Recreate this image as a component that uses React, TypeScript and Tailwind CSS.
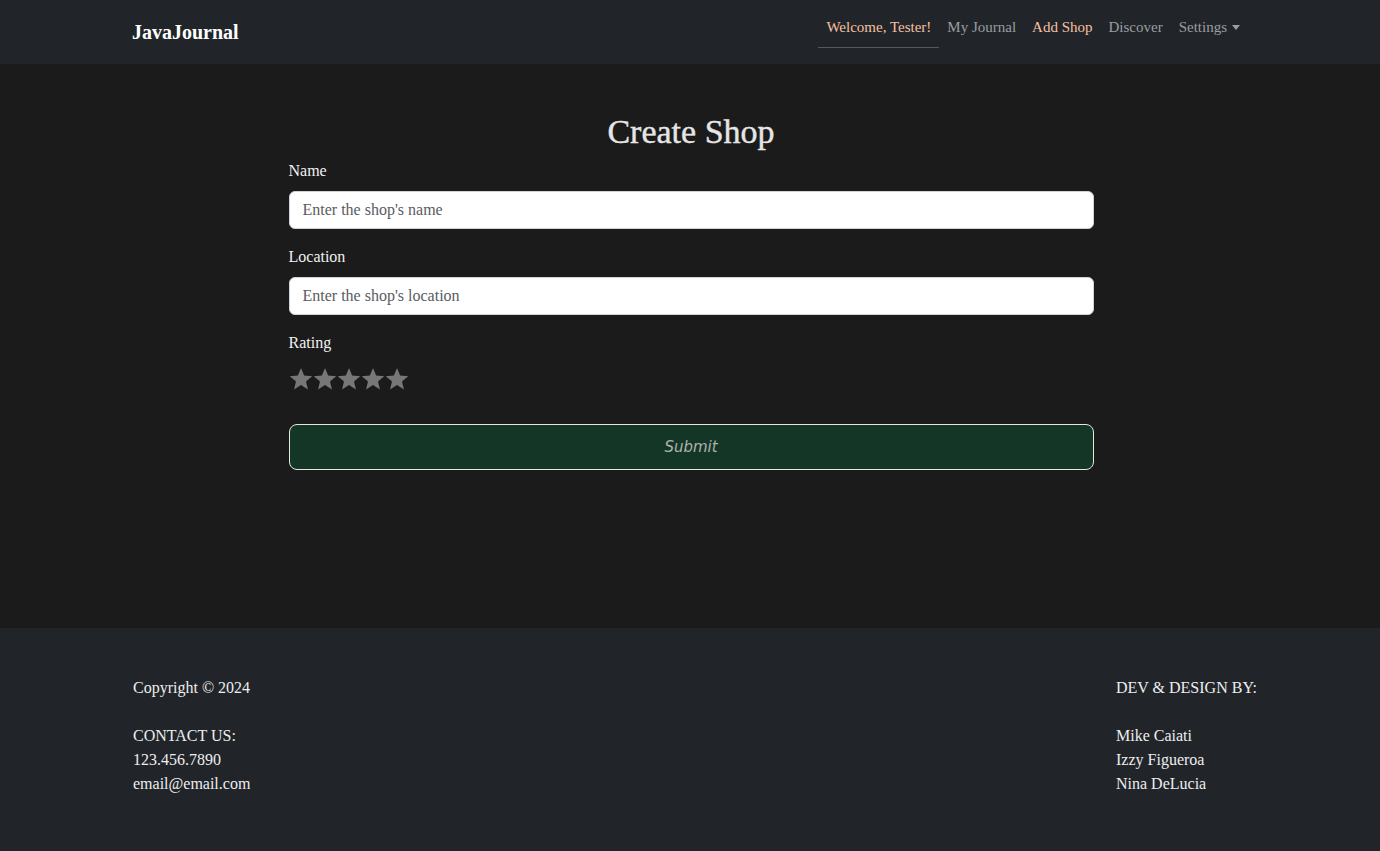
import React from 'react';

const serif = "font-['Liberation_Serif',serif]";

const Star = () => (
  <svg viewBox="0 0 24 24" className="h-[25px] w-[24px] fill-[#777777]">
    <path d="M12 1.5l3.09 7.6 8.16.6-6.25 5.28 1.95 7.97L12 18.6l-6.95 4.35 1.95-7.97L.75 9.7l8.16-.6z" />
  </svg>
);

const Navbar = () => (
  <nav className="h-16 bg-[#212529]">
    <div className="mx-auto flex h-full w-[1140px] items-center justify-between px-3">
      <a className={`${serif} text-[20px] font-bold text-white`}>JavaJournal</a>
      <ul className={`${serif} flex items-start self-start pt-[15px] text-[15px] leading-6`}>
        <li className="border-b border-[#55595e] px-2 pb-[8px] text-[#f7c0a1]">Welcome, Tester!</li>
        <li className="px-2 text-[#9a9da1]">My Journal</li>
        <li className="px-2 text-[#f7c0a1]">Add Shop</li>
        <li className="px-2 text-[#9a9da1]">Discover</li>
        <li className="flex items-center px-2 text-[#9a9da1]">
          Settings
          <span className="ml-[5px] mt-[1px] h-0 w-0 border-x-[4px] border-t-[5px] border-x-transparent border-t-[#9a9da1]" />
        </li>
      </ul>
    </div>
  </nav>
);

const Field = ({ label, placeholder }: { label: string; placeholder: string }) => (
  <div className="mb-[16px]">
    <label className="mb-[8px] block text-[16px] leading-6 text-[#f1f1f1]">{label}</label>
    <input
      placeholder={placeholder}
      className="h-[38px] w-full rounded-[6px] border border-[#ced4da] bg-white px-[13px] text-[16px] text-[#212529] placeholder:text-[#595c5f] outline-none"
    />
  </div>
);

export default function App() {
  return (
    <div className={`${serif} min-h-[851px] bg-[#1b1b1b]`}>
      <Navbar />
      <main className="h-[564px] pt-[48px]">
        <div className="mx-auto w-[805px] translate-x-[1px]">
          <h1 className="mb-[7px] text-center text-[34px] font-normal leading-10 text-[#e6e6e6] [-webkit-text-stroke:0.4px_#e6e6e6]">
            Create Shop
          </h1>
          <Field label="Name" placeholder="Enter the shop's name" />
          <Field label="Location" placeholder="Enter the shop's location" />
          <label className="mb-[11px] block text-[16px] leading-6 text-[#f1f1f1]">Rating</label>
          <div className="flex">
            {[0, 1, 2, 3, 4].map((i) => (
              <Star key={i} />
            ))}
          </div>
          <button className="mt-[33px] h-[46px] w-full rounded-[8px] border border-[#e6e6e6] bg-[#143626] font-['DejaVu_Sans',sans-serif] text-[15px] italic text-[#aab2ad]">
            Submit
          </button>
        </div>
      </main>
      <footer className="h-[223px] bg-[#212529] pt-[48px]">
        <div className="mx-auto flex w-[1140px] justify-between px-3 text-[16px] leading-6 text-[#eeeeee]">
          <div className="pl-[1px]">
            <p>Copyright © 2024</p>
            <p>&nbsp;</p>
            <p>CONTACT US:</p>
            <p>123.456.7890</p>
            <p>email@email.com</p>
          </div>
          <div className="w-[132px]">
            <p className="whitespace-nowrap">DEV &amp; DESIGN BY:</p>
            <p>&nbsp;</p>
            <p>Mike Caiati</p>
            <p>Izzy Figueroa</p>
            <p>Nina DeLucia</p>
          </div>
        </div>
      </footer>
    </div>
  );
}
